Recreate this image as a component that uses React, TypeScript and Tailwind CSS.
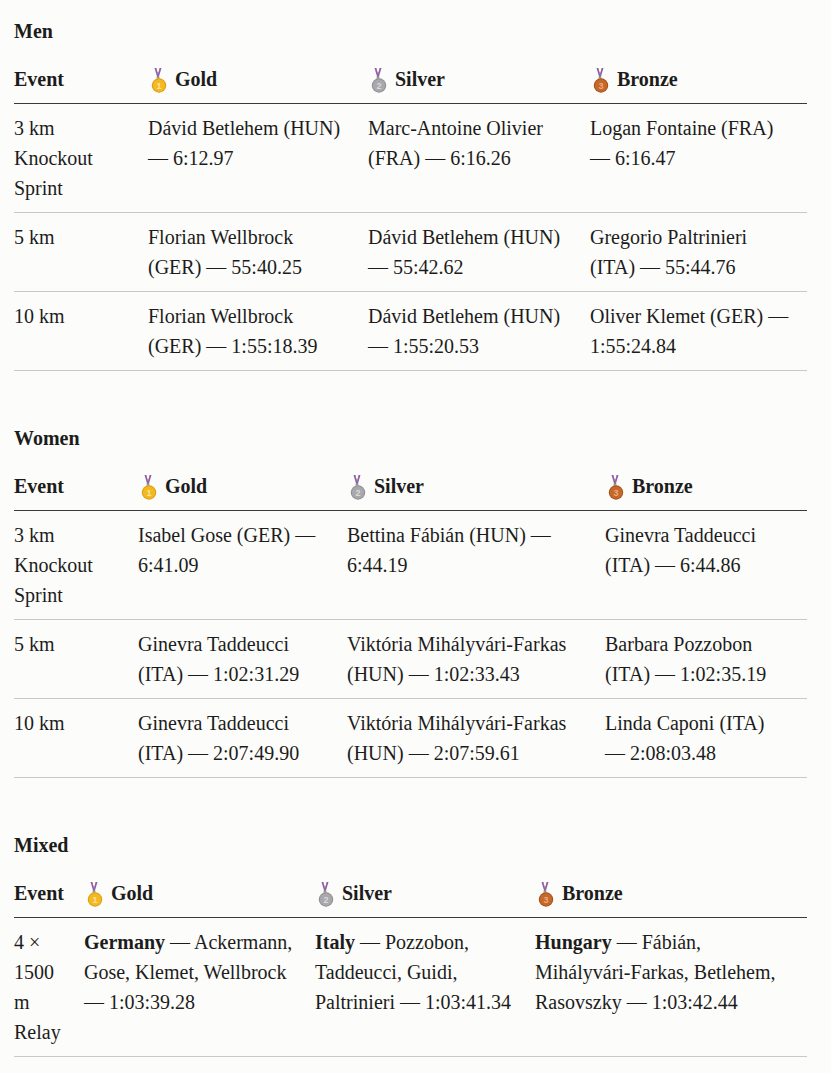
import React from "react";

type Medal = "gold" | "silver" | "bronze";

const medalColors: Record<Medal, { fill: string; rim: string; num: string; label: string }> = {
  gold: { fill: "#f4b823", rim: "#dc9b10", num: "#fde39a", label: "1" },
  silver: { fill: "#a8a8ad", rim: "#8c8c92", num: "#dadadd", label: "2" },
  bronze: { fill: "#c5682a", rim: "#a4501b", num: "#ecab80", label: "3" },
};

function MedalIcon({ kind }: { kind: Medal }) {
  const c = medalColors[kind];
  return (
    <svg width="20" height="26" viewBox="0 0 20 26" className="inline-block align-[-8px] mr-[7px]">
      <path d="M6.5 0 L9.2 9 L10.8 9 L13.5 0 L11.8 0 L10 6.2 L8.2 0 Z" fill="#6a6ac8" />
      <path d="M7.6 0 L9.6 7 L10.4 7 L12.4 0 L11.8 0 L10 6.2 L8.2 0 Z" fill="#e24c5c" />
      <rect x="8.6" y="8.5" width="2.8" height="2.2" fill="#a39677" />
      <circle cx="11" cy="17.5" r="7.2" fill={c.rim} />
      <circle cx="11" cy="17.5" r="6.2" fill={c.fill} />
      <text
        x="11"
        y="20.8"
        textAnchor="middle"
        fontSize="9"
        fontFamily="'Liberation Sans', Arial, sans-serif"
        fontWeight="700"
        fill={c.num}
      >
        {c.label}
      </text>
    </svg>
  );
}

type Cell = React.ReactNode;

function Lines({ lines }: { lines: Cell[] }) {
  return (
    <>
      {lines.map((l, i) => (
        <div key={i} className="whitespace-nowrap">
          {l}
        </div>
      ))}
    </>
  );
}

function Section({
  title,
  widths,
  rows,
  first,
}: {
  title: string;
  widths: number[];
  rows: Cell[][][];
  first?: boolean;
}) {
  return (
    <section className={first ? "" : "mt-[52px]"}>
      <h3 className="font-bold leading-[30px] mb-[9px]">{title}</h3>
      <table className="table-fixed border-collapse w-[793px]">
        <colgroup>
          {widths.map((w, i) => (
            <col key={i} style={{ width: w }} />
          ))}
        </colgroup>
        <thead>
          <tr className="border-b border-[#3a3a3a]">
            <th className="text-left font-bold py-[9px] align-top">Event</th>
            <th className="text-left font-bold py-[9px] align-top whitespace-nowrap">
              <MedalIcon kind="gold" />
              Gold
            </th>
            <th className="text-left font-bold py-[9px] align-top whitespace-nowrap">
              <MedalIcon kind="silver" />
              Silver
            </th>
            <th className="text-left font-bold py-[9px] align-top whitespace-nowrap">
              <MedalIcon kind="bronze" />
              Bronze
            </th>
          </tr>
        </thead>
        <tbody>
          {rows.map((r, i) => (
            <tr key={i} className="border-b border-[#c9c9c6]">
              {r.map((c, j) => (
                <td key={j} className="py-[9px] align-top">
                  <Lines lines={c} />
                </td>
              ))}
            </tr>
          ))}
        </tbody>
      </table>
    </section>
  );
}

export default function App() {
  const men: Cell[][][] = [
    [
      ["3 km", "Knockout", "Sprint"],
      ["Dávid Betlehem (HUN)", "— 6:12.97"],
      ["Marc-Antoine Olivier", "(FRA) — 6:16.26"],
      ["Logan Fontaine (FRA)", "— 6:16.47"],
    ],
    [
      ["5 km"],
      ["Florian Wellbrock", "(GER) — 55:40.25"],
      ["Dávid Betlehem (HUN)", "— 55:42.62"],
      ["Gregorio Paltrinieri", "(ITA) — 55:44.76"],
    ],
    [
      ["10 km"],
      ["Florian Wellbrock", "(GER) — 1:55:18.39"],
      ["Dávid Betlehem (HUN)", "— 1:55:20.53"],
      ["Oliver Klemet (GER) —", "1:55:24.84"],
    ],
  ];
  const women: Cell[][][] = [
    [
      ["3 km", "Knockout", "Sprint"],
      ["Isabel Gose (GER) —", "6:41.09"],
      ["Bettina Fábián (HUN) —", "6:44.19"],
      ["Ginevra Taddeucci", "(ITA) — 6:44.86"],
    ],
    [
      ["5 km"],
      ["Ginevra Taddeucci", "(ITA) — 1:02:31.29"],
      ["Viktória Mihályvári-Farkas", "(HUN) — 1:02:33.43"],
      ["Barbara Pozzobon", "(ITA) — 1:02:35.19"],
    ],
    [
      ["10 km"],
      ["Ginevra Taddeucci", "(ITA) — 2:07:49.90"],
      ["Viktória Mihályvári-Farkas", "(HUN) — 2:07:59.61"],
      ["Linda Caponi (ITA)", "— 2:08:03.48"],
    ],
  ];
  const mixed: Cell[][][] = [
    [
      ["4 ×", "1500", "m", "Relay"],
      [
        <>
          <strong className="font-bold">Germany</strong> — Ackermann,
        </>,
        "Gose, Klemet, Wellbrock",
        "— 1:03:39.28",
      ],
      [
        <>
          <strong className="font-bold">Italy</strong> — Pozzobon,
        </>,
        "Taddeucci, Guidi,",
        "Paltrinieri — 1:03:41.34",
      ],
      [
        <>
          <strong className="font-bold">Hungary</strong> — Fábián,
        </>,
        "Mihályvári-Farkas, Betlehem,",
        "Rasovszky — 1:03:42.44",
      ],
    ],
  ];

  return (
    <div className="min-h-[1073px] bg-[#fcfcfa] text-[#1c1c1c] pt-[16px] pl-[14px] pb-[16px] text-[20px] leading-[30px] font-['Liberation_Serif','Times_New_Roman',serif]">
      <Section title="Men" widths={[134, 220, 222, 217]} rows={men} first />
      <Section title="Women" widths={[124, 209, 258, 202]} rows={women} />
      <Section title="Mixed" widths={[70, 231, 220, 272]} rows={mixed} />
    </div>
  );
}
